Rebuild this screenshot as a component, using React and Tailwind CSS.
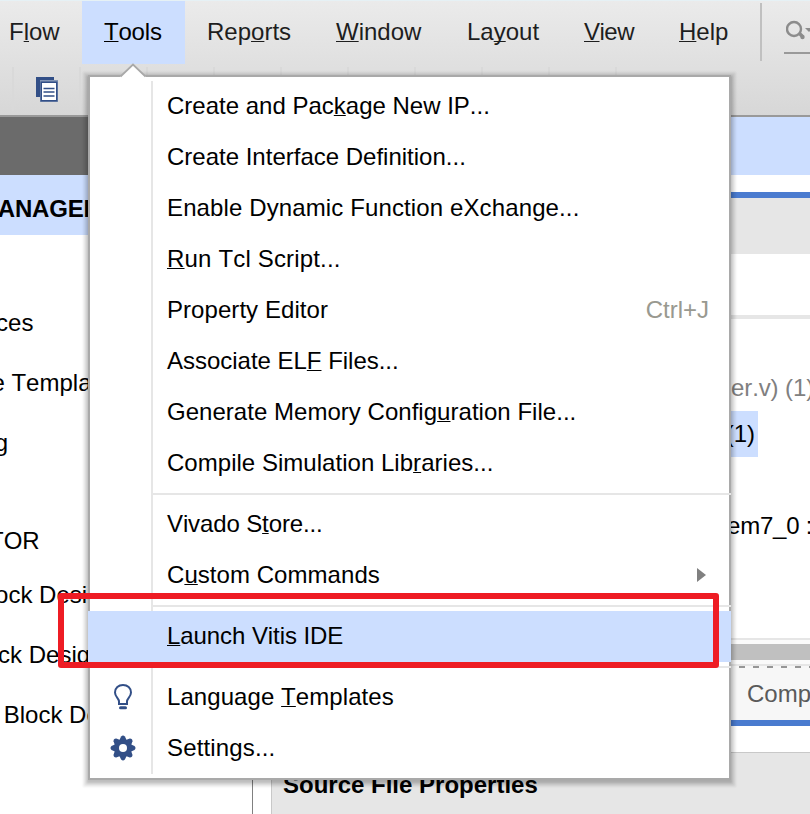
import React from "react";

const U = ({ children }) => (
  <span className="underline decoration-1 underline-offset-1 [text-decoration-skip-ink:none]">{children}</span>
);

const label = (text, key) => {
  if (key === undefined) return text;
  return (
    <>
      {text.slice(0, key)}
      <U>{text[key]}</U>
      {text.slice(key + 1)}
    </>
  );
};

const menus = [
  { text: "Flow", k: 1, cls: "w-[94px] -ml-[13px]" },
  { text: "Tools", k: 0, cls: "w-[103px] ml-px bg-[#ccdeff] text-black tracking-[-0.2px]" },
  { text: "Reports", k: 3, cls: "w-[128px]" },
  { text: "Window", k: 0, cls: "w-[131px] pl-[23px]" },
  { text: "Layout", k: 2, cls: "w-[117px] pl-[23px]" },
  { text: "View", k: 0, cls: "w-[95px] pl-[23px] tracking-[-0.5px]" },
  { text: "Help", k: 0, cls: "w-[104px] pl-[23px]" },
];

function MenuBar() {
  return (
    <div className="flex h-16 pt-px">
      {menus.map((m) => (
        <div key={m.text} className={"shrink-0 pl-[22px] text-[#1e1e1e] leading-[61px] " + m.cls}>
          {label(m.text, m.k)}
        </div>
      ))}
      <div className="mt-0.5 h-[58px] w-0.5 shrink-0 bg-[#c0c0c0]" />
      <div className="ml-[22px] flex h-[53px] w-[26px] shrink-0 items-start border-b-2 border-[#999] pl-0.5 pt-[19px]">
        <svg width="24" height="22" viewBox="0 0 24 22" fill="none" stroke="#8c8c8c">
          <circle cx="8" cy="9" r="7" strokeWidth="2.4" />
          <path d="M13.500 13.500l3 3" strokeWidth="3.500" />
          <circle cx="16.500" cy="17" r="2.200" fill="#8c8c8c" stroke="none" />
          <path d="M19 8h8l-4 4z" fill="#8c8c8c" stroke="none" />
        </svg>
      </div>
    </div>
  );
}

function ToolBar() {
  return (
    <div className="flex h-[51px] pl-3 pt-[3px]">
      {Array.from({ length: 10 }, (_, i) => (
        <div key={i} className="h-11 w-[67px] shrink-0 border-l-2 border-[#d9d9d9]">
          {i === 0 && (
            <svg className="ml-[22px] mt-[10px]" width="23" height="26" viewBox="0 0 23 26">
              <path d="M0 0h18v20H0z" fill="#324f87" />
              <path d="M4 3h18v22H4z" fill="#8496b6" />
              <path d="M4.500 4.500h17v20h-17z" fill="#324f87" />
              <path d="M6 6h14v17H6z" fill="#fff" />
              <path d="M7.500 11.500h11M7.500 15h11M7.500 19h11" stroke="#324f87" strokeWidth="1.700" />
            </svg>
          )}
        </div>
      ))}
    </div>
  );
}

function Navigator() {
  return (
    <div className="flex w-[252px] shrink-0 flex-col overflow-hidden whitespace-nowrap">
      <div className="h-[58px] shrink-0 bg-[#6b6b6b]" />
      <div className="h-[60px] shrink-0 bg-[#ccdeff] font-bold leading-[67px]">
        <span className="-ml-[22px] tracking-[-0.2px]">MANAGER</span>
      </div>
      <div className="mt-[58px] h-[60px] leading-[60px]"><span className="-ml-[84px]">IP Sources</span></div>
      <div className="h-[60px] leading-[60px]"><span className="-ml-[102px]">Language Templates</span></div>
      <div className="h-[60px] leading-[60px]"><span className="-ml-[104px]">IP Catalog</span></div>
      <div className="mt-[38px] h-[60px] leading-[60px]"><span className="-ml-[147px]">IP INTEGRATOR</span></div>
      <div className="-mt-[6px] h-[60px] leading-[60px]"><span className="-ml-[105px]">Create Block Design</span></div>
      <div className="h-[60px] leading-[60px]"><span className="-ml-[102px]">Open Block Design</span></div>
      <div className="h-[60px] leading-[60px]"><span className="-ml-[103px]">Generate Block Design</span></div>
    </div>
  );
}

function Workspace() {
  return (
    <div className="flex min-w-0 flex-1 flex-col overflow-hidden whitespace-nowrap border-l border-[#808080]">
      <div className="h-[58px] shrink-0 bg-[#ccdeff]" />
      <div className="ml-[18px] flex flex-1 flex-col">
        <div className="mt-[17px] h-1.5 bg-[#4a7bcf]" />
        <div className="h-14 bg-[#e6e6e6]" />
        <div className="mt-[61px] h-1 bg-[#e6e6e6]" />
        <div className="mt-[46px] h-[46px] pl-[460px] leading-[46px] tracking-[-0.1px] text-[#808080]">er.v) (1)</div>
        <div className="h-[46px] w-[487px] bg-[#ccdeff] text-right leading-[46px]"><span className="pr-[3px]">(1)</span></div>
        <div className="mt-[46px] h-[46px] pl-[456px] leading-[46px] tracking-[-0.2px]">em7_0 :</div>
        <div className="mt-[89px] h-0.5 bg-[#e6e6e6]" />
        <div className="h-6 border-y-4 border-[#fafafa] bg-[#c0c0c0]" />
        <div className="h-0.5 bg-[#e6e6e6]" />
        <div className="h-0.5 bg-[repeating-linear-gradient(90deg,#969696_0px,#969696_6px,#f7f7f7_6px,#f7f7f7_14px)] bg-[position:6px_0]" />
        <div className="h-[58px] border-b-[6px] border-[#4a7bcf] bg-[#f7f7f7] pl-[476px] leading-[51px] text-[#5a5a5a]">Compile Order</div>
        <div className="mt-[26px] flex-1 border-l border-t border-[#c8c8c8] bg-[#e6e6e6] pl-[11px] pt-[2px] font-bold leading-[60px]">
          Source File Properties
        </div>
      </div>
    </div>
  );
}

const Bulb = () => (
  <svg width="18" height="26" viewBox="0 0 18 26" fill="none" stroke="#324f87">
    <path d="M5 20V17.500C5 14.500 1 13 1 8.500C1 4 4.500 1 9 1s8 3 8 7.500c0 4.500-4 6-4 9V20z" strokeWidth="2" />
    <path d="M6.500 23.700h5" strokeWidth="3" strokeLinecap="round" />
  </svg>
);

const Gear = () => (
  <svg width="26" height="26" viewBox="-13 -13 26 26">
    <g fill="#324f87">
      {[0, 45, 90, 135, 180, 225, 270, 315].map((a) => (
        <path key={a} d="M-4-7L-1.900-11.500Q0-13.500 1.900-11.500L4-7z" transform={`rotate(${a})`} />
      ))}
      <circle r="8.800" />
    </g>
    <circle r="4" fill="#fff" />
  </svg>
);

const items = [
  { text: "Create and Package New IP...", k: 14, t: "tracking-normal" },
  { text: "Create Interface Definition...", t: "tracking-normal" },
  { text: "Enable Dynamic Function eXchange...", t: "tracking-[0.12px]" },
  { text: "Run Tcl Script...", k: 0, t: "tracking-[0.17px]" },
  { text: "Property Editor", shortcut: "Ctrl+J", t: "tracking-[0.06px]" },
  { text: "Associate ELF Files...", k: 12, t: "tracking-[-0.02px]" },
  { text: "Generate Memory Configuration File...", k: 22, t: "tracking-[0.03px]" },
  { text: "Compile Simulation Libraries...", k: 22, t: "tracking-[0.03px]" },
  null,
  { text: "Vivado Store...", k: 8, t: "tracking-[-0.12px]" },
  { text: "Custom Commands", k: 1, arrow: true, t: "tracking-[0.05px]" },
  null,
  { text: "Launch Vitis IDE", k: 0, active: true, t: "tracking-[-0.07px]" },
  null,
  { text: "Language Templates", k: 9, icon: <Bulb />, t: "tracking-[0.07px]" },
  { text: "Settings...", icon: <Gear />, t: "tracking-[0.15px]" },
];

function ToolsMenu() {
  return (
    <div className="absolute left-[88px] top-[75px] h-[705px] w-[643px] border-2 border-[#a9a9a9] bg-white py-1 shadow-[0_2px_2px_1px_rgba(0,0,0,0.13),0_2px_2px_3px_rgba(0,0,0,0.08),0_2px_2px_5px_rgba(0,0,0,0.07)]">
      <svg className="absolute left-[30px] top-[-14px]" width="26" height="15" viewBox="0 0 26 15">
        <path d="M0 15V14L13 1.500L26 14v1z" fill="#fff" />
        <path d="M0.500 13.500L13 1.500L25.500 13.500" fill="none" stroke="#a9a9a9" strokeWidth="1.800" />
      </svg>
      {items.map((it, i) =>
        it ? (
          <div key={i} className={"-mx-0.5 flex h-[51px] " + (it.active ? "relative bg-[#ccdeff]" : "px-0.5")}>
            <div
              className={
                "flex shrink-0 items-center justify-center border-r-2 " +
                (it.active ? "w-[65px] border-[#ccdeff]" : "w-[63px] border-[#e6e6e6]")
              }
            >
              {it.icon && <span className="-mt-px ml-1">{it.icon}</span>}
            </div>
            <div className="flex flex-1 items-center justify-between pl-3.5 pr-5">
              <span className={"leading-[49px] pb-0.5 " + it.t}>{label(it.text, it.k)}</span>
              {it.shortcut && <span className="pb-0.5 leading-[49px] text-[#999990]">{it.shortcut}</span>}
              {it.arrow && (
                <svg className="-mt-0.5 mr-[3px]" width="9" height="14" viewBox="0 0 9 14">
                  <path d="M0 0L9 7L0 14z" fill="#808080" />
                </svg>
              )}
            </div>
          </div>
        ) : (
          <div key={i} className="relative -mr-0.5 flex h-2.5 items-center">
            <div className="h-2.5 w-[63px] border-r-2 border-[#e6e6e6]" />
            <div className="h-0.5 flex-1 bg-[#e6e6e6]" />
          </div>
        )
      )}
    </div>
  );
}

export default function App() {
  return (
    <div className="relative flex h-[814px] w-[810px] flex-col overflow-hidden bg-white font-['Liberation_Sans',Arial,sans-serif] text-[24px] text-black [font-kerning:none]">
      <div className="h-[117px] shrink-0 overflow-hidden border-b-2 border-[#999] bg-linear-to-b from-[#ebebeb] to-[#d7d7d7] shadow-[inset_0_1px_0_#e6f1f5]">
        <MenuBar />
        <ToolBar />
      </div>
      <div className="flex min-h-0 flex-1">
        <Navigator />
        <Workspace />
      </div>
      <ToolsMenu />
      <div className="absolute left-[58px] top-[593px] h-[75px] w-[661px] rounded-[3px] border-[6px] border-[#ee1c24]" />
    </div>
  );
}
